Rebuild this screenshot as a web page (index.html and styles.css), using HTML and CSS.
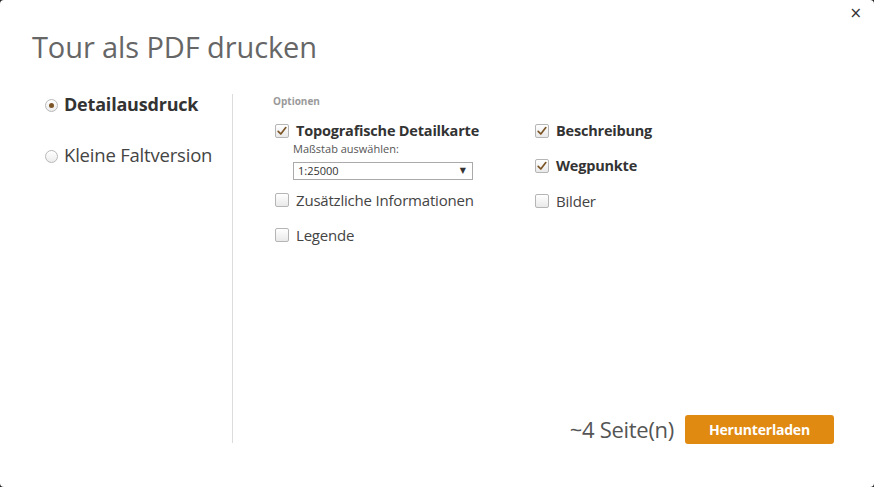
FILE: index.html
```html
<!DOCTYPE html>
<html>
<head>
<meta charset="utf-8">
<link rel="stylesheet" href="styles.css">
</head>
<body>
<div class="dialog">
  <span class="close">×</span>
  <h1 class="title">Tour als PDF drucken</h1>
  <div class="main">
    <div class="side">
      <div class="radio-row active"><span class="radio"><span class="dot"></span></span>Detailausdruck</div>
      <div class="radio-row"><span class="radio"></span>Kleine Faltversion</div>
    </div>
    <div class="content">
      <div class="section-label">Optionen</div>
      <div class="options">
        <div class="col col1">
          <div class="opt bold"><span class="cb checked"><svg viewBox="0 0 14 14" width="14" height="14"><path d="M3.2 7.4 L5.8 10 L10.8 3.6" fill="none" stroke="#7b5526" stroke-width="1.7" stroke-linecap="round" stroke-linejoin="round"/></svg></span>Topografische Detailkarte</div>
          <div class="scale">
            <div class="scale-label">Maßstab auswählen:</div>
            <div class="select"><span>1:25000</span><span class="arrow">▼</span></div>
          </div>
          <div class="opt"><span class="cb"></span>Zusätzliche Informationen</div>
          <div class="opt"><span class="cb"></span>Legende</div>
        </div>
        <div class="col col2">
          <div class="opt bold"><span class="cb checked"><svg viewBox="0 0 14 14" width="14" height="14"><path d="M3.2 7.4 L5.8 10 L10.8 3.6" fill="none" stroke="#7b5526" stroke-width="1.7" stroke-linecap="round" stroke-linejoin="round"/></svg></span>Beschreibung</div>
          <div class="opt bold"><span class="cb checked"><svg viewBox="0 0 14 14" width="14" height="14"><path d="M3.2 7.4 L5.8 10 L10.8 3.6" fill="none" stroke="#7b5526" stroke-width="1.7" stroke-linecap="round" stroke-linejoin="round"/></svg></span>Wegpunkte</div>
          <div class="opt"><span class="cb"></span>Bilder</div>
        </div>
      </div>
      <div class="footer">
        <span class="pages">~4 Seite(n)</span>
        <button class="download">Herunterladen</button>
      </div>
    </div>
  </div>
</div>
</body>
</html>
```
FILE: styles.css
```css
html, body {
  margin: 0;
  padding: 0;
  background: #222;
}
body {
  width: 874px;
  height: 487px;
  font-family: "Open Sans", "Liberation Sans", sans-serif;
  color: #333;
}
.dialog {
  position: relative;
  box-sizing: border-box;
  width: 874px;
  height: 487px;
  background: #fff;
  border-radius: 4px;
  padding: 28px 0 0 32px;
}
.close {
  position: absolute;
  right: 12px;
  top: 4px;
  font-family: "DejaVu Sans", sans-serif;
  font-size: 15px;
  color: #333;
}
.title {
  margin: 0;
  font-weight: 400;
  font-size: 29px;
  line-height: 38px;
  color: #666;
  letter-spacing: -0.1px;
}
.main {
  display: flex;
  margin-top: 29px;
}
.side {
  width: 187px;
  padding-left: 13px;
  margin-top: -3px;
}
.radio-row {
  display: flex;
  align-items: center;
  font-family: "Open Sans", sans-serif;
  font-size: 18.5px;
  line-height: 24px;
  color: #444;
  height: 24px;
  margin-bottom: 27px;
  letter-spacing: -0.2px;
}
.radio-row.active {
  font-weight: 700;
  font-size: 18px;
  color: #333;
}
.radio {
  width: 11px;
  height: 11px;
  border: 1px solid #b8b8b8;
  border-radius: 50%;
  margin-right: 6px;
  margin-top: 3px;
  display: flex;
  align-items: center;
  justify-content: center;
  background: linear-gradient(#fff, #ececec);
  flex: none;
}
.dot {
  width: 5px;
  height: 5px;
  border-radius: 50%;
  background: #7b5526;
}
.content {
  flex: 1;
  border-left: 1px solid #dcdcdc;
  height: 349px;
  margin-top: -1px;
  padding-left: 40px;
  display: flex;
  flex-direction: column;
  font-family: "Open Sans", sans-serif;
}
.section-label {
  font-size: 10px;
  font-weight: 700;
  color: #9a9a9a;
  line-height: 14px;
}
.options {
  display: flex;
  margin-top: 13px;
}
.col1 {
  width: 260px;
  padding-left: 2px;
}
.opt {
  display: flex;
  align-items: center;
  font-size: 15px;
  line-height: 20px;
  color: #444;
  height: 20px;
  margin-bottom: 15px;
  letter-spacing: -0.2px;
}
.opt.bold {
  font-weight: 700;
  font-size: 14.5px;
  color: #333;
}
.cb {
  width: 12px;
  height: 12px;
  border: 1px solid #b5b5b5;
  border-radius: 2px;
  background: linear-gradient(#fff, #e9e9e9);
  margin-right: 7px;
  flex: none;
  position: relative;
}
.cb svg {
  position: absolute;
  left: -1px;
  top: -1px;
}
.col1 .opt.bold {
  margin-bottom: 0;
}
.scale {
  padding-left: 18px;
  margin-bottom: 14px;
}
.scale-label {
  font-size: 11px;
  line-height: 14px;
  color: #555;
  margin-top: 1px;
}
.select {
  box-sizing: border-box;
  width: 180px;
  height: 18px;
  border: 1px solid #aaa;
  font-size: 11px;
  line-height: 16px;
  padding: 0 6px 0 4px;
  margin-top: 6px;
  display: flex;
  justify-content: space-between;
  color: #333;
}
.arrow {
  font-family: "DejaVu Sans", sans-serif;
  font-size: 8px;
  color: #333;
}
.col1 .scale + .opt {
  margin-top: -4px;
}
.footer {
  margin-top: auto;
  display: flex;
  align-items: center;
  justify-content: flex-end;
  padding-right: 40px;
  margin-bottom: -1px;
  height: 30px;
}
.pages {
  font-size: 22px;
  color: #555;
  margin-right: 11px;
  letter-spacing: -0.3px;
}
.download {
  width: 149px;
  height: 29px;
  border: none;
  border-radius: 3px;
  background: #e08a12;
  color: #fff;
  font-family: "Open Sans", sans-serif;
  font-weight: 700;
  font-size: 14px;
  letter-spacing: -0.2px;
}
```
